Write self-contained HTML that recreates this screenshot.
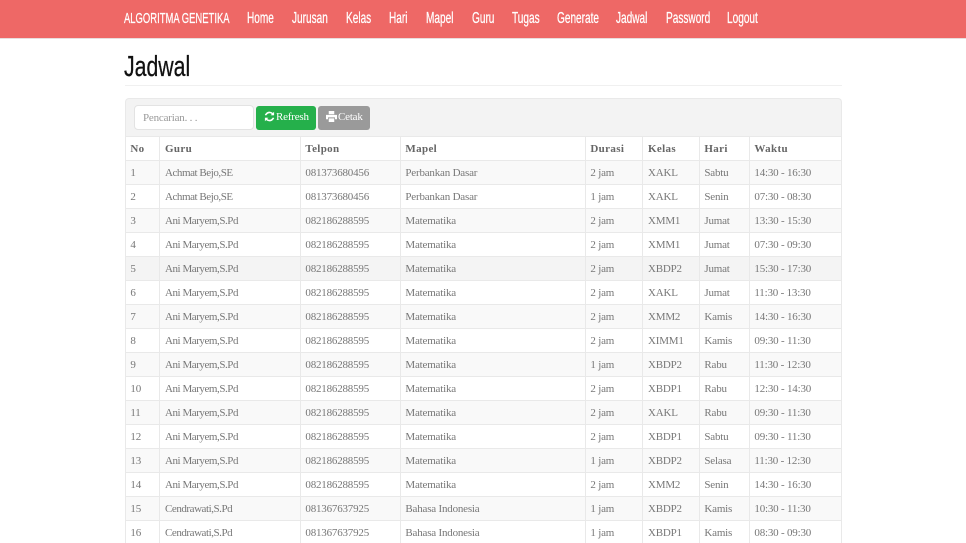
<!DOCTYPE html>
<html><head><meta charset="utf-8"><title>Jadwal</title>
<style>
*{box-sizing:border-box}
html,body{margin:0;padding:0;width:966px;height:543px;overflow:hidden;background:#fff}
body{font-family:"Liberation Serif",serif;color:#777;position:relative}
.nav{position:absolute;left:0;top:0;width:966px;height:39px;background:#ee6866;border-bottom:1px solid #e8dedd}
.nav span{position:absolute;top:10px;font:normal 16px/18px "Liberation Sans",sans-serif;color:#fff;white-space:nowrap;transform-origin:0 0;transform:scaleX(.63);-webkit-text-stroke:.25px #fff}
h1{position:absolute;left:124px;top:50px;margin:0;font:normal 29px/34px "Liberation Sans",sans-serif;color:#111;transform-origin:0 0;transform:scaleX(.733);-webkit-text-stroke:.3px #111;white-space:nowrap}
.hr{position:absolute;left:125px;top:85px;width:717px;height:1px;background:#f0f0f0}
.panel{position:absolute;left:125px;top:98px;width:717px;height:39px;background:#f3f3f3;border:1px solid #e9e9e9;border-bottom:0;border-radius:4px 4px 0 0}
.input{position:absolute;left:134px;top:105px;width:120px;height:25px;background:#fff;border:1px solid #e3e3e3;border-radius:4px;font-size:11px;line-height:24px;padding-left:8px;color:#999;letter-spacing:-.2px}
.btn{position:absolute;top:106px;height:24px;border-radius:3px;color:#fff;font-size:11px;line-height:23px;white-space:nowrap;font-weight:normal}
.btn svg{position:absolute;top:5px}
.btn b{position:absolute;top:0;font-weight:normal;letter-spacing:-.2px}
table{position:absolute;left:125px;top:136px;width:716px;border-collapse:collapse;table-layout:fixed;font-size:11px;letter-spacing:-.2px}
td,th{border:1px solid #e9e9e9;height:24px;padding:0 4px 0 4.4px;text-align:left;white-space:nowrap;overflow:hidden;line-height:22px}
td:nth-child(2),th:nth-child(2),td:nth-child(6),th:nth-child(6){padding-left:5px}
td:nth-child(2){letter-spacing:-.45px}
th{color:#666;font-weight:bold;letter-spacing:.35px}
tbody tr:nth-child(odd){background:#f9f9f9}
tbody tr.h{background:#f4f4f4}
</style></head><body>
<div class="nav">
<span style="left:124px;font-size:15px;transform:scaleX(.63)">ALGORITMA GENETIKA</span>
<span style="left:247px">Home</span>
<span style="left:292px">Jurusan</span>
<span style="left:346px">Kelas</span>
<span style="left:389px">Hari</span>
<span style="left:426px">Mapel</span>
<span style="left:472px">Guru</span>
<span style="left:512px">Tugas</span>
<span style="left:557px">Generate</span>
<span style="left:616px">Jadwal</span>
<span style="left:666px">Password</span>
<span style="left:727px">Logout</span>
</div>
<h1>Jadwal</h1>
<div class="hr"></div>
<div class="panel"></div>
<div class="input">Pencarian. . .</div>
<div class="btn" style="left:256px;width:60px;background:#25b04b">
<svg style="left:8px;top:5px" width="11" height="11" viewBox="0 0 12 12" fill="none" stroke="#fff" stroke-width="1.7"><path d="M10.2 4.5A4.5 4.5 0 0 0 2.4 3.4L1.5 4.500"/><path d="M1.8 7.500A4.500 4.500 0 0 0 9.600 8.600l.9-1.100"/><path d="M11 .8v3.900H7.200z" stroke="none" fill="#fff"/><path d="M1 11.200V7.300h3.800z" stroke="none" fill="#fff"/></svg>
<b style="left:20px">Refresh</b></div>
<div class="btn" style="left:318px;width:52px;background:#9a9a9a">
<svg style="left:8px;top:5px" width="11" height="11" viewBox="0 0 12 12" fill="#fff"><path d="M3 0h6v3.500H3zM0 4.200h12V9h-2.200V7H2.200V9H0zM3 8h6v4H3z"/></svg>
<b style="left:20px">Cetak</b></div>
<table>
<colgroup><col style="width:34px"><col style="width:141px"><col style="width:100px"><col style="width:185px"><col style="width:57px"><col style="width:57px"><col style="width:50px"><col style="width:92px"></colgroup>
<thead><tr><th>No</th><th>Guru</th><th>Telpon</th><th>Mapel</th><th>Durasi</th><th>Kelas</th><th>Hari</th><th>Waktu</th></tr></thead>
<tbody>
<tr><td>1</td><td>Achmat Bejo,SE</td><td>081373680456</td><td>Perbankan Dasar</td><td>2 jam</td><td>XAKL</td><td>Sabtu</td><td>14:30 - 16:30</td></tr>
<tr><td>2</td><td>Achmat Bejo,SE</td><td>081373680456</td><td>Perbankan Dasar</td><td>1 jam</td><td>XAKL</td><td>Senin</td><td>07:30 - 08:30</td></tr>
<tr><td>3</td><td>Ani Maryem,S.Pd</td><td>082186288595</td><td>Matematika</td><td>2 jam</td><td>XMM1</td><td>Jumat</td><td>13:30 - 15:30</td></tr>
<tr><td>4</td><td>Ani Maryem,S.Pd</td><td>082186288595</td><td>Matematika</td><td>2 jam</td><td>XMM1</td><td>Jumat</td><td>07:30 - 09:30</td></tr>
<tr class="h"><td>5</td><td>Ani Maryem,S.Pd</td><td>082186288595</td><td>Matematika</td><td>2 jam</td><td>XBDP2</td><td>Jumat</td><td>15:30 - 17:30</td></tr>
<tr><td>6</td><td>Ani Maryem,S.Pd</td><td>082186288595</td><td>Matematika</td><td>2 jam</td><td>XAKL</td><td>Jumat</td><td>11:30 - 13:30</td></tr>
<tr><td>7</td><td>Ani Maryem,S.Pd</td><td>082186288595</td><td>Matematika</td><td>2 jam</td><td>XMM2</td><td>Kamis</td><td>14:30 - 16:30</td></tr>
<tr><td>8</td><td>Ani Maryem,S.Pd</td><td>082186288595</td><td>Matematika</td><td>2 jam</td><td>XIMM1</td><td>Kamis</td><td>09:30 - 11:30</td></tr>
<tr><td>9</td><td>Ani Maryem,S.Pd</td><td>082186288595</td><td>Matematika</td><td>1 jam</td><td>XBDP2</td><td>Rabu</td><td>11:30 - 12:30</td></tr>
<tr><td>10</td><td>Ani Maryem,S.Pd</td><td>082186288595</td><td>Matematika</td><td>2 jam</td><td>XBDP1</td><td>Rabu</td><td>12:30 - 14:30</td></tr>
<tr><td>11</td><td>Ani Maryem,S.Pd</td><td>082186288595</td><td>Matematika</td><td>2 jam</td><td>XAKL</td><td>Rabu</td><td>09:30 - 11:30</td></tr>
<tr><td>12</td><td>Ani Maryem,S.Pd</td><td>082186288595</td><td>Matematika</td><td>2 jam</td><td>XBDP1</td><td>Sabtu</td><td>09:30 - 11:30</td></tr>
<tr><td>13</td><td>Ani Maryem,S.Pd</td><td>082186288595</td><td>Matematika</td><td>1 jam</td><td>XBDP2</td><td>Selasa</td><td>11:30 - 12:30</td></tr>
<tr><td>14</td><td>Ani Maryem,S.Pd</td><td>082186288595</td><td>Matematika</td><td>2 jam</td><td>XMM2</td><td>Senin</td><td>14:30 - 16:30</td></tr>
<tr><td>15</td><td>Cendrawati,S.Pd</td><td>081367637925</td><td>Bahasa Indonesia</td><td>1 jam</td><td>XBDP2</td><td>Kamis</td><td>10:30 - 11:30</td></tr>
<tr><td>16</td><td>Cendrawati,S.Pd</td><td>081367637925</td><td>Bahasa Indonesia</td><td>1 jam</td><td>XBDP1</td><td>Kamis</td><td>08:30 - 09:30</td></tr>
</tbody></table>
</body></html>
